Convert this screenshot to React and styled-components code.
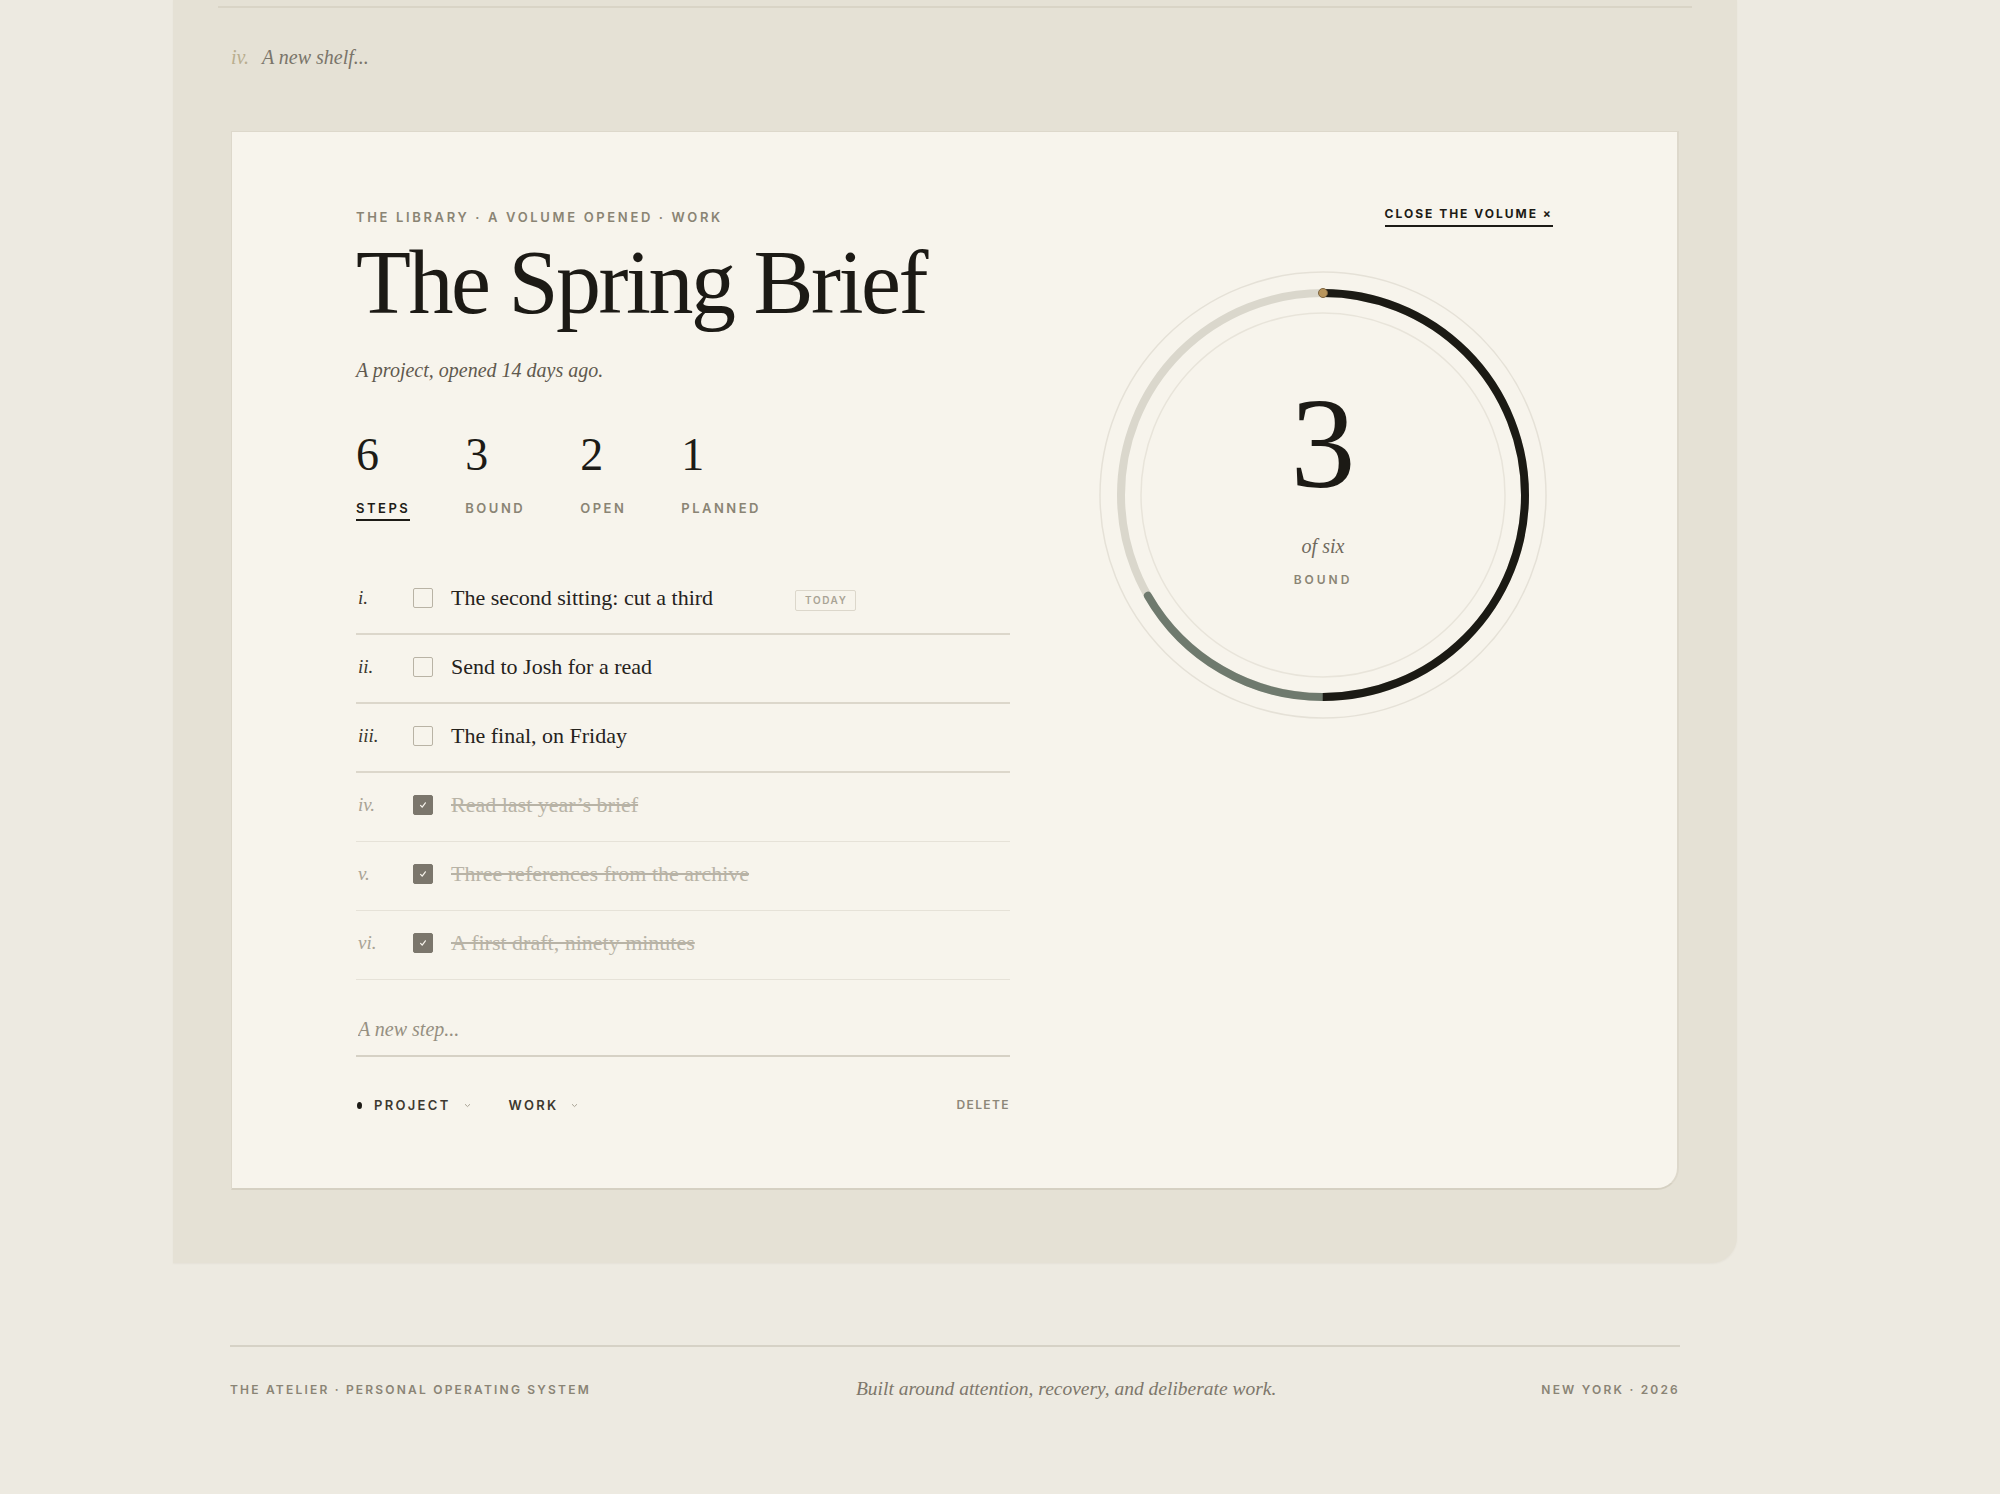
import React from "react"
import styled, { createGlobalStyle } from "styled-components"

const SERIF = `"Liberation Serif", "Times New Roman", serif`
const SANS = `Inter, "Liberation Sans", Arial, sans-serif`

const Global = createGlobalStyle`
  * { box-sizing: border-box; }
  html, body {
    margin: 0;
    padding: 0;
    background: #edeae1;
  }
  body {
    font-family: ${SERIF};
    color: #1c1a15;
    -webkit-font-smoothing: antialiased;
  }
`

const Page = styled.div`
  width: 1564px;
  min-height: 1494px;
  margin-left: 173px;
`

const Shelf = styled.section`
  background: #e5e1d5;
  padding: 6px 58px 73px;
  border-bottom-right-radius: 26px;
  box-shadow: 0 1px 2px rgba(120, 110, 80, 0.06);
`

const ShelfRule = styled.div`
  height: 2px;
  margin: 0 -13px;
  background: #d9d4c6;
`

const NewShelf = styled.div`
  display: flex;
  align-items: baseline;
  gap: 13px;
  margin: 34px 0 59px;
  font-style: italic;
  font-size: 20px;
  line-height: 30px;
  color: #7a756a;

  span {
    color: #b9ae8f;
  }
`

const Volume = styled.article`
  display: grid;
  grid-template-columns: 654px 1fr;
  background: #f7f4ec;
  border: 1px solid #ddd8cb;
  border-right-width: 2px;
  border-bottom: 2px solid #d5d0c2;
  border-bottom-right-radius: 22px;
  padding: 77px 124px 75px;
`

const Left = styled.div`
  display: flex;
  flex-direction: column;
`

const Crumb = styled.div`
  font-family: ${SANS};
  font-size: 13px;
  line-height: 16px;
  font-weight: 600;
  letter-spacing: 2.65px;
  text-transform: uppercase;
  color: #8a8474;
`

const Title = styled.h1`
  margin: 13px 0 0;
  font-size: 90px;
  line-height: 90px;
  font-weight: 400;
  letter-spacing: -2.5px;
  color: #1c1a15;
`

const Sub = styled.p`
  margin: 30px 0 0;
  font-style: italic;
  font-size: 20px;
  line-height: 24px;
  color: #5f594e;
`

const Stats = styled.div`
  display: flex;
  gap: 55px;
  margin-top: 50px;
`

const Stat = styled.div`
  display: flex;
  flex-direction: column;
  align-items: flex-start;
`

const StatNum = styled.div`
  font-size: 46px;
  line-height: 46px;
  color: #1d1b16;
`

const StatLabel = styled.div`
  margin-top: 22px;
  padding-bottom: 3px;
  font-family: ${SANS};
  font-size: 13px;
  line-height: 16px;
  font-weight: 600;
  letter-spacing: 2.5px;
  color: ${(p) => (p.$active ? "#1d1b16" : "#8a8474")};
  border-bottom: 2px solid ${(p) => (p.$active ? "#1d1b16" : "transparent")};
`

const Steps = styled.div`
  margin-top: 45px;
`

const Step = styled.div`
  display: grid;
  grid-template-columns: 57px 38px 344px auto;
  align-items: center;
  justify-items: start;
  padding: 18px 0 ${(p) => (p.$done ? "22px" : "21px")};
  border-bottom: ${(p) => (p.$done ? "1px solid #e6e2d8" : "2px solid #dcd7cb")};
`

const Numeral = styled.span`
  font-style: italic;
  font-size: 19px;
  line-height: 28px;
  color: ${(p) => (p.$done ? "#a9a395" : "#3a362e")};
  margin-left: 2px;
`

const Box = styled.span`
  width: 20px;
  height: 20px;
  display: flex;
  align-items: center;
  justify-content: center;
  border-radius: 2px;
  border: 1.5px solid ${(p) => (p.$done ? "#7b766c" : "#b9b3a5")};
  background: ${(p) => (p.$done ? "#7b766c" : "transparent")};
`

const StepText = styled.span`
  font-size: 22px;
  line-height: 28px;
  color: ${(p) => (p.$done ? "#b8b3a6" : "#25221c")};
  text-decoration: ${(p) => (p.$done ? "line-through" : "none")};
  text-decoration-thickness: 1.5px;
  white-space: nowrap;
`

const Badge = styled.span`
  margin-top: 4px;
  padding: 4px 8px 4px 9px;
  font-family: ${SANS};
  font-size: 10px;
  line-height: 11px;
  font-weight: 600;
  letter-spacing: 1.6px;
  color: #a9a395;
  border: 1.5px solid #dcd7cb;
  border-radius: 2px;
`

const NewStep = styled.input`
  display: block;
  width: 100%;
  margin: 0;
  padding: 35px 0 12px 2px;
  border: none;
  border-bottom: 2px solid #d6d1c5;
  background: transparent;
  outline: none;
  font-family: ${SERIF};
  font-style: italic;
  font-size: 20px;
  line-height: 28px;
  color: #25221c;

  &::placeholder {
    color: #958f81;
  }
`

const Meta = styled.div`
  display: flex;
  align-items: center;
  gap: 38px;
  margin-top: 40px;
  font-family: ${SANS};
  font-size: 13px;
  line-height: 16px;
  font-weight: 600;
`

const Tag = styled.span`
  display: flex;
  align-items: center;
  letter-spacing: 2.3px;
  color: #3d3930;
`

const Dot = styled.span`
  width: 5px;
  height: 7px;
  margin: 0 12px 0 1px;
  border-radius: 50%;
  background: #1d1b16;
`

const Chevron = styled.svg`
  margin-left: 13px;
`

const Delete = styled.span`
  margin-left: auto;
  font-size: 12px;
  letter-spacing: 1.4px;
  color: #8d8779;
`

const Right = styled.div`
  display: flex;
  flex-direction: column;
  align-items: flex-end;
`

const Close = styled.a`
  margin-top: -3px;
  padding-bottom: 3px;
  font-family: ${SANS};
  font-size: 12px;
  line-height: 16px;
  font-weight: 700;
  letter-spacing: 2px;
  color: #1d1b16;
  text-decoration: none;
  border-bottom: 2px solid #1d1b16;
`

const Dial = styled.div`
  display: grid;
  width: 460px;
  height: 460px;
  margin-top: 38px;

  & > * {
    grid-area: 1 / 1;
  }
`

const DialFace = styled.div`
  align-self: center;
  justify-self: center;
  display: flex;
  flex-direction: column;
  align-items: center;
  padding-bottom: 25px;
`

const DialNum = styled.div`
  font-size: 130px;
  line-height: 130px;
  color: #1c1a15;
`

const DialOf = styled.div`
  margin-top: 26px;
  font-style: italic;
  font-size: 20px;
  line-height: 24px;
  color: #6f695d;
`

const DialLabel = styled.div`
  margin-top: 15px;
  font-family: ${SANS};
  font-size: 12px;
  line-height: 14px;
  font-weight: 600;
  letter-spacing: 3px;
  color: #8a8474;
`

const Footer = styled.footer`
  margin-top: 82px;
  padding: 0 57px;
`

const FooterRule = styled.div`
  height: 2px;
  background: #d6d2c6;
`

const FooterRow = styled.div`
  display: flex;
  align-items: center;
  justify-content: space-between;
  margin-top: 30px;
  height: 24px;
`

const FootCaps = styled.span`
  font-family: ${SANS};
  font-size: 12px;
  font-weight: 600;
  letter-spacing: 2.2px;
  text-transform: uppercase;
  color: #8a8475;
`

const FootNote = styled.span`
  font-style: italic;
  font-size: 19.5px;
  color: #7d776b;
`

const stats = [
  { n: 6, label: "STEPS", active: true },
  { n: 3, label: "BOUND" },
  { n: 2, label: "OPEN" },
  { n: 1, label: "PLANNED" },
]

const steps = [
  { n: "i.", text: "The second sitting: cut a third", today: true },
  { n: "ii.", text: "Send to Josh for a read" },
  { n: "iii.", text: "The final, on Friday" },
  { n: "iv.", text: "Read last year’s brief", done: true },
  { n: "v.", text: "Three references from the archive", done: true },
  { n: "vi.", text: "A first draft, ninety minutes", done: true },
]

const R = 202
const CIRC = 2 * Math.PI * R

function Ring() {
  return (
    <svg width="460" height="460" viewBox="0 0 460 460">
      <circle cx="230" cy="230" r="223" fill="none" stroke="#e5e1d7" strokeWidth="1.5" />
      <circle cx="230" cy="230" r="182" fill="none" stroke="#e8e4da" strokeWidth="1.5" />
      <circle cx="230" cy="230" r={R} fill="none" stroke="#dad7cc" strokeWidth="8" />
      <g transform="rotate(-90 230 230)">
        <circle
          cx="230"
          cy="230"
          r={R}
          fill="none"
          stroke="#6f7a6e"
          strokeWidth="8"
          strokeLinecap="round"
          strokeDasharray={`${CIRC / 6} ${CIRC}`}
          strokeDashoffset={-CIRC / 2}
        />
        <circle
          cx="230"
          cy="230"
          r={R}
          fill="none"
          stroke="#1b1a14"
          strokeWidth="8"
          strokeDasharray={`${CIRC / 2} ${CIRC}`}
        />
      </g>
      <circle cx="230" cy={230 - R} r="4.5" fill="#b8955c" stroke="#7d6440" strokeWidth="1" />
    </svg>
  )
}

function Check() {
  return (
    <svg width="12" height="12" viewBox="0 0 12 12">
      <path d="M3.6 6.4 L5.2 8.2 L8.4 3.8" fill="none" stroke="#f7f4ec" strokeWidth="1.2" strokeLinecap="round" strokeLinejoin="round" />
    </svg>
  )
}

function Down() {
  return (
    <Chevron width="7" height="5" viewBox="0 0 7 5">
      <path d="M1 1.2 L3.5 3.6 L6 1.2" fill="none" stroke="#aaa496" strokeWidth="1" />
    </Chevron>
  )
}

export default function App() {
  return (
    <>
      <Global />
      <Page>
        <Shelf>
          <ShelfRule />
          <NewShelf>
            <span>iv.</span>A new shelf...
          </NewShelf>
          <Volume>
            <Left>
              <Crumb>The Library · A Volume Opened · Work</Crumb>
              <Title>The Spring Brief</Title>
              <Sub>A project, opened 14 days ago.</Sub>
              <Stats>
                {stats.map((s) => (
                  <Stat key={s.label}>
                    <StatNum>{s.n}</StatNum>
                    <StatLabel $active={s.active}>{s.label}</StatLabel>
                  </Stat>
                ))}
              </Stats>
              <Steps>
                {steps.map((s) => (
                  <Step key={s.n} $done={s.done}>
                    <Numeral $done={s.done}>{s.n}</Numeral>
                    <Box $done={s.done}>{s.done && <Check />}</Box>
                    <StepText $done={s.done}>{s.text}</StepText>
                    {s.today ? <Badge>TODAY</Badge> : <span />}
                  </Step>
                ))}
              </Steps>
              <NewStep placeholder="A new step..." />
              <Meta>
                <Tag>
                  <Dot />
                  PROJECT
                  <Down />
                </Tag>
                <Tag>
                  WORK
                  <Down />
                </Tag>
                <Delete>DELETE</Delete>
              </Meta>
            </Left>
            <Right>
              <Close href="#">CLOSE THE VOLUME ×</Close>
              <Dial>
                <Ring />
                <DialFace>
                  <DialNum>3</DialNum>
                  <DialOf>of six</DialOf>
                  <DialLabel>BOUND</DialLabel>
                </DialFace>
              </Dial>
            </Right>
          </Volume>
        </Shelf>
        <Footer>
          <FooterRule />
          <FooterRow>
            <FootCaps>The Atelier · Personal Operating System</FootCaps>
            <FootNote>Built around attention, recovery, and deliberate work.</FootNote>
            <FootCaps>New York · 2026</FootCaps>
          </FooterRow>
        </Footer>
      </Page>
    </>
  )
}
